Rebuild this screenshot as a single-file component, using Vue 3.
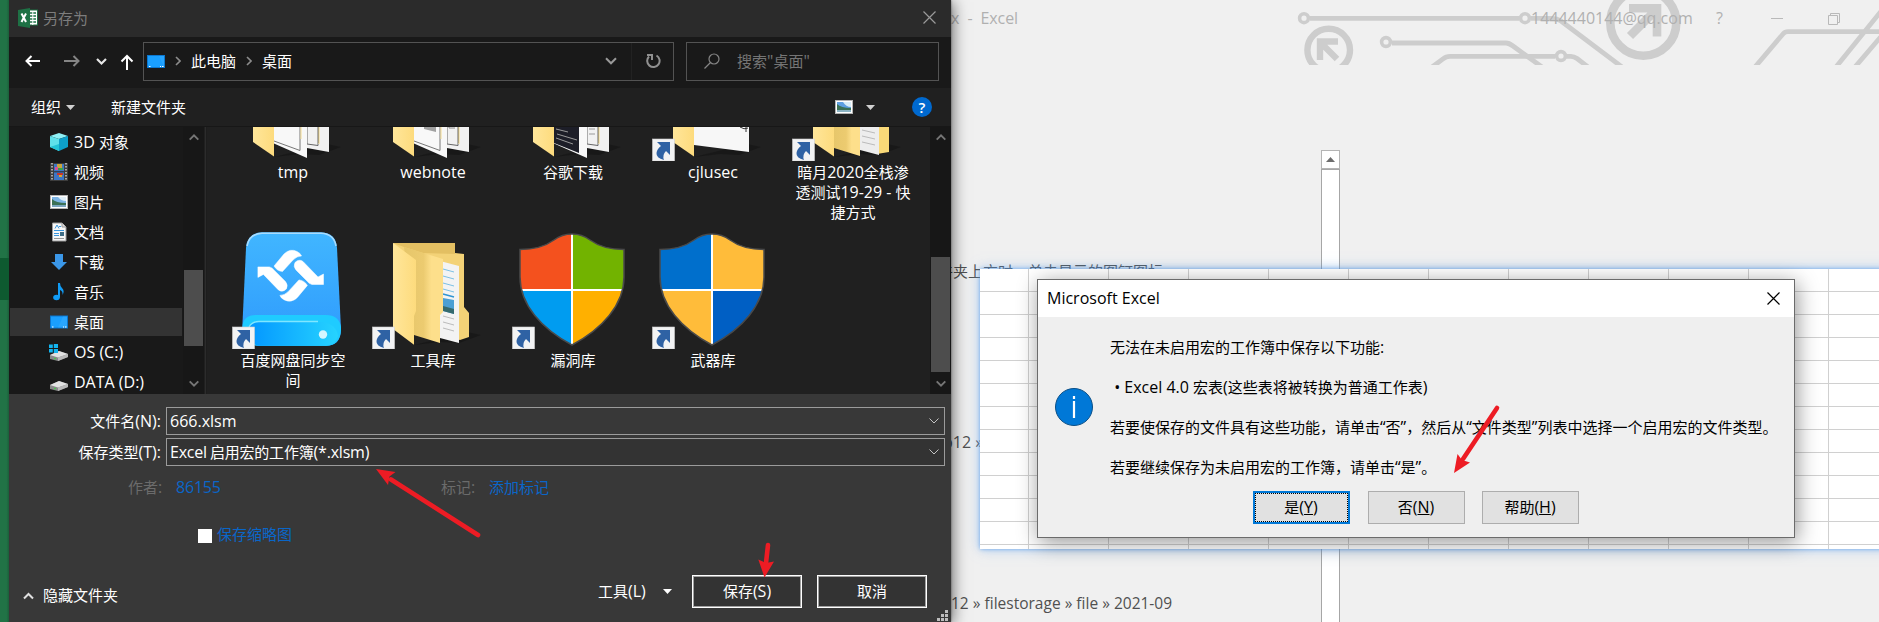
<script setup>
import { h } from 'vue'

// Splits mixed text so that Latin runs get their own optical size.
const Mix = (props) =>
  h('span', { class: 'mix' },
    (props.t.match(/[\u3000-\u9fff\uff00-\uffef]+|[^\u3000-\u9fff\uff00-\uffef]+/g) || []).map((run) =>
      /[\u3000-\u9fff\uff00-\uffef]/.test(run) ? run : h('span', { class: 'latin' }, run)))
Mix.props = ['t']

const places = [
  { name: '3D 对象', icon: 'cube' },
  { name: '视频', icon: 'film' },
  { name: '图片', icon: 'picture' },
  { name: '文档', icon: 'doc' },
  { name: '下载', icon: 'down' },
  { name: '音乐', icon: 'music' },
  { name: '桌面', icon: 'desktop', active: true },
  { name: 'OS (C:)', icon: 'osdisk' },
  { name: 'DATA (D:)', icon: 'disk' },
]

const files = [
  { lines: ['tmp'], icon: 'papers' },
  { lines: ['webnote'], icon: 'papers', print: true },
  { lines: ['谷歌下载'], icon: 'papers', dark: true },
  { lines: ['cjlusec'], icon: 'single', link: true },
  { lines: ['暗月2020全栈渗', '透测试19-29 - 快', '捷方式'], icon: 'nested', link: true },
  { lines: ['百度网盘同步空', '间'], icon: 'sync', link: true },
  { lines: ['工具库'], icon: 'folder', link: true },
  { lines: ['漏洞库'], icon: 'shield', link: true, colors: ['#f4511e', '#72b300', '#009cf0', '#ffb000'] },
  { lines: ['武器库'], icon: 'shield', link: true, colors: ['#006fcc', '#ffbc3a', '#ffbc3a', '#005fc4'] },
]

const messages = [
  '无法在未启用宏的工作簿中保存以下功能:',
  ' • Excel 4.0 宏表(这些表将被转换为普通工作表)',
  '若要使保存的文件具有这些功能，请单击“否”，然后从“文件类型”列表中选择一个启用宏的文件类型。',
  '若要继续保存为未启用宏的工作簿，请单击“是”。',
]
</script>

<template>
  <div class="screen">
    <!-- Excel backstage -->
    <section class="excel">
      <svg class="circuit" width="600" height="65" viewBox="1279 0 600 65" fill="none" stroke="#cdcdcd">
        <g stroke-width="4.8">
          <path d="M1310 18.3H1519M1531 18.3H1552Q1557 18.3 1561 21L1622 67" />
          <path d="M1392 43H1506Q1509 43 1513 46L1542 67" />
          <path d="M1432 67L1443 59Q1446 56.3 1450 56.3H1555M1566 56.3H1571Q1574 56.3 1577 58.5L1588 67" />
          <path d="M1755 67L1783 34Q1785 31.7 1788 31.7H1879M1836 67L1882 10M1855 67L1884 33" />
        </g>
        <g stroke-width="3.6">
          <circle cx="1304" cy="18.2" r="4.4" /><circle cx="1525" cy="18.2" r="4.4" />
          <circle cx="1386" cy="42" r="4.4" /><circle cx="1561" cy="56" r="4.4" />
        </g>
        <circle cx="1328.700" cy="50" r="21.300" stroke-width="6.400" />
        <path d="M1338 41.500H1320V60M1320 42L1337 59" stroke-width="6.400" />
        <circle cx="1643.300" cy="22.700" r="33" stroke-width="8.600" />
        <path d="M1629 8.300H1657V36.500M1657 9L1630 36" stroke-width="8.600" />
      </svg>
      <header class="exceltitle">
        <Mix class="doc" t="x&nbsp; -&nbsp; Excel" />
        <Mix class="mail" t="1444440144@qq.com" />
        <Mix class="q" t="?" />
        <svg class="winctl" width="72" height="16" viewBox="0 0 72 16" fill="none" stroke="#b9b9b9">
          <path d="M0 8.500H12M57.500 5.500H66.500V14.500H57.500ZM59.500 5V3.500H68.500V12.500H67" />
        </svg>
      </header>
      <div class="recents">
        <div class="hint"><Mix t="件夹上方时，单击显示的图钉图标" /></div>
        <div class="p1"><Mix t="b12 »" /></div>
        <div class="p2"><Mix t="12 » filestorage » file » 2021-09" /></div>
      </div>
      <div class="xscroll">
        <div class="xup"><svg width="9" height="5" viewBox="0 0 9 5"><path d="M0 5L4.500 0L9 5Z" fill="#6d6d6d" /></svg></div>
        <div class="xtrack"></div>
      </div>
    </section>

    <!-- Save-as window -->
    <section class="save">
      <header class="title">
        <svg width="20" height="20" viewBox="0 0 20 20">
          <rect x="9" y="2" width="10.500" height="15" fill="#fff" stroke="#1e7145" />
          <path d="M12 5H18M12 8H18M12 11H18M12 14H18" stroke="#1e7145" stroke-width="1.300" />
          <path d="M14.800 3V17" stroke="#fff" stroke-width="1" />
          <path d="M0 2L12 0V20L0 18Z" fill="#1e7145" />
          <path d="M3.500 5.500L8 14M8 5.500L3.500 14" stroke="#fff" stroke-width="2" />
        </svg>
        <Mix t="另存为" />
        <svg class="close" width="13" height="13" viewBox="0 0 13 13"><path d="M.5.500L12.500 12.500M12.500.500L.5 12.500" stroke="#9a9a9a" stroke-width="1.200" /></svg>
      </header>

      <div class="nav">
        <svg class="arrows" width="126" height="20" viewBox="0 0 126 20" fill="none" stroke-width="2">
          <path d="M15 9H1.500M6.500 4L1.500 9L6.500 14" stroke="#fff" />
          <path d="M39 9H53M48.500 4L53.500 9L48.500 14" stroke="#858585" />
          <path d="M72 7L76.500 11.500L81 7" stroke="#e6e6e6" stroke-width="2.200" />
          <path d="M102 18V4M96.500 9.500L102 4L107.500 9.500" stroke="#fff" />
        </svg>
        <div class="address">
          <svg width="18" height="13" viewBox="0 0 18 13"><rect x=".5" y=".5" width="17" height="12" fill="#1a9fff" stroke="#0b77d0" /><path d="M1 12H17L12 1H17V12" fill="#33abff" opacity=".5" /><path d="M2 11.500H3.500M13 11.500H14M15 11.500H16.500" stroke="#fff" /></svg>
          <svg class="sep" width="6" height="10" viewBox="0 0 6 10"><path d="M1 1L5 5L1 9" fill="none" stroke="#8c8c8c" stroke-width="1.600" /></svg>
          <Mix t="此电脑" />
          <svg class="sep" width="6" height="10" viewBox="0 0 6 10"><path d="M1 1L5 5L1 9" fill="none" stroke="#8c8c8c" stroke-width="1.600" /></svg>
          <Mix t="桌面" />
          <svg class="drop" width="12" height="8" viewBox="0 0 12 8"><path d="M1 1.300L6 6.300L11 1.300" fill="none" stroke="#9a9a9a" stroke-width="2" /></svg>
          <div class="refresh">
            <svg width="16" height="16" viewBox="0 0 16 16" fill="none" stroke="#909090" stroke-width="2"><path d="M11.500 2.500A6.200 6.200 0 1 1 4 3.500M2 2H7V7" /></svg>
          </div>
        </div>
        <div class="search">
          <svg width="16" height="16" viewBox="0 0 16 16" fill="none" stroke="#858585" stroke-width="1.200"><circle cx="10" cy="6" r="5" /><path d="M6.500 9.500L.5 15.500" /></svg>
          <Mix t='搜索"桌面"' />
        </div>
      </div>

      <div class="tools">
        <Mix t="组织" />
        <svg class="tri" width="9" height="5" viewBox="0 0 9 5"><path d="M0 0H9L4.500 5Z" fill="#d0d0d0" /></svg>
        <Mix class="newf" t="新建文件夹" />
        <svg class="view" width="18" height="14" viewBox="0 0 18 14"><rect width="18" height="14" fill="#b4b4b4" /><rect x="1" y="1" width="16" height="12" fill="#fff" /><rect x="2" y="2" width="14" height="10" fill="#5e9fe0" /><path d="M8 2H16V7Q11 7 8 2Z" fill="#d9edf8" /><path d="M2 4Q6 8 16 8V12H2Z" fill="#3b7156" /><path d="M2 10H16V12H2Z" fill="#8cb4c4" /></svg>
        <svg class="tri2" width="9" height="5" viewBox="0 0 9 5"><path d="M0 0H9L4.500 5Z" fill="#d0d0d0" /></svg>
        <div class="help">?</div>
      </div>

      <div class="body">
        <nav class="side">
          <div v-for="p in places" :key="p.name" class="place" :class="{ active: p.active }">
            <svg width="20" height="20" viewBox="0 0 20 20">
              <g v-if="p.icon === 'cube'">
                <path d="M1 4L10 1L19 4L10 7Z" fill="#8ff0f5" /><path d="M1 4L10 7V19L1 15Z" fill="#5fe0ea" /><path d="M19 4L10 7V19L19 15Z" fill="#0d9fc9" /><path d="M1 15L10 12V19Z" fill="#23c4d6" />
              </g>
              <g v-else-if="p.icon === 'film'">
                <rect x="1" y="1" width="18" height="18" fill="#3c3c3c" /><rect x="5" y="2" width="10" height="16" fill="#3d76c4" />
                <path d="M3 1V19M17 1V19" stroke="#a5a5a5" stroke-width="2" stroke-dasharray="1.500 1.500" />
                <rect x="8" y="2" width="5" height="4" fill="#caa43a" /><rect x="6" y="5" width="3" height="3" fill="#d94fa0" /><rect x="9" y="6" width="5" height="2" fill="#3aa14b" />
                <rect x="8" y="11" width="6" height="2" fill="#c8352c" /><rect x="10" y="13" width="3" height="2" fill="#e0a62c" /><path d="M5 9.800H15" stroke="#2b2b2b" />
              </g>
              <g v-else-if="p.icon === 'picture'">
                <rect x="1" y="3" width="18" height="14" fill="#b4b4b4" /><rect x="2" y="4" width="16" height="12" fill="#fff" /><rect x="3" y="5" width="14" height="10" fill="#7db5e6" /><path d="M9 5H17V9Q12 9 9 5Z" fill="#dfeff9" /><path d="M3 7Q7 11 17 11V15H3Z" fill="#3b7156" /><path d="M3 13H17V15H3Z" fill="#7ba6c0" />
              </g>
              <g v-else-if="p.icon === 'doc'">
                <path d="M3.500 1H13L17 5V19H3.500Z" fill="#f7f7f7" stroke="#9a9a9a" /><path d="M13 1V5H17" fill="#ddd" stroke="#9a9a9a" />
                <path d="M6 6.500L8 3L10 6.500M10 4.500H12M5 8.500H15M5 11.500H10M5 13.500H10" stroke="#3a96dd" fill="none" /><rect x="11" y="10" width="4" height="4" fill="#3f6d86" /><path d="M5 16.500H15" stroke="#999" />
              </g>
              <path v-else-if="p.icon === 'down'" d="M6 2H14V10H18L10 18L2 10H6Z" fill="#3b97e8" />
              <g v-else-if="p.icon === 'music'">
                <ellipse cx="7.500" cy="15.500" rx="3.300" ry="2.700" fill="#109bf5" /><path d="M9 1H11Q11 4 13 6Q16 9 13.500 13Q14 9 11 8V15.500H9Z" fill="#109bf5" />
              </g>
              <g v-else-if="p.icon === 'desktop'">
                <rect x="1.500" y="4" width="17" height="12" fill="#1a9fff" stroke="#0b77d0" /><path d="M9 15.500L14 4.500H18V15.500Z" fill="#33abff" opacity=".6" /><path d="M3 15H4.500M14 15H15M16 15H17.500" stroke="#fff" />
              </g>
              <g v-else>
                <path d="M1 13L10 9L19 12V15L9 19L1 17Z" fill="#8a8a8a" /><path d="M1 13L10 9L19 12L9 15.500Z" fill="#e2e2e2" /><path d="M9 15.500L19 12V15L9 19Z" fill="#b9b9b9" /><rect x="5" y="15.800" width="2" height="1.500" fill="#49c34f" />
                <path v-if="p.icon === 'osdisk'" d="M0 2.500H3.800V6H0ZM4.800 2H9V6H4.800ZM0 7H3.800V10.500H0ZM4.800 7H9V11H4.800Z" fill="#12b4f0" />
              </g>
            </svg>
            <Mix :t="p.name" />
          </div>
        </nav>
        <div class="vscroll one">
          <svg width="10" height="7" viewBox="0 0 10 7"><path d="M.700 5.700L5 1.400L9.300 5.700" fill="none" stroke="#767676" stroke-width="1.900" /></svg>
          <i></i>
          <svg width="10" height="7" viewBox="0 0 10 7"><path d="M.700 1.300L5 5.600L9.300 1.300" fill="none" stroke="#767676" stroke-width="1.900" /></svg>
        </div>
        <div class="files">
          <div class="grid">
            <div v-for="f in files" :key="f.lines[0]" class="file">
              <svg width="140" height="120" viewBox="0 0 140 120">
                <defs>
                  <linearGradient id="fold" x1="0" x2="1"><stop offset="0" stop-color="#ffe69a" /><stop offset="1" stop-color="#fddb7d" /></linearGradient>
                  <linearGradient id="foldmid" x1="0" x2="1"><stop offset="0" stop-color="#e6c66a" /><stop offset=".5" stop-color="#eccb70" /><stop offset=".7" stop-color="#fddf8b" /></linearGradient>
                  <linearGradient id="drive" x1="0" y1="0" x2="0" y2="1"><stop offset="0" stop-color="#41b6ff" /><stop offset="1" stop-color="#2e9afd" /></linearGradient>
                  <linearGradient id="base" x1="0" x2="1"><stop offset="0" stop-color="#0396ff" /><stop offset="1" stop-color="#26d3ff" /></linearGradient>
                </defs>
                <path v-if="f.icon !== 'sync' && f.icon !== 'shield'" d="M51 116L77 113L96 114L118 106L104 103Z" fill="#151515" opacity=".7" />
                <g v-if="f.icon === 'papers'">
                  <path d="M84 20L106 26V111L84 107Z" fill="#f1f1f1" />
                  <path d="M84 84V103L95 104.500V84M95.500 84V102" fill="none" stroke="#666" stroke-width="1" /><path d="M96 84V103" stroke="#f5dd91" />
                  <path d="M51 30L84 38V117L51 102.500Z" fill="#f8f8f8" />
                  <path v-if="!f.dark" d="M51 100L77 109.500V84" fill="none" stroke="#777" /><path v-if="!f.dark" d="M78 84V98" stroke="#f5dd91" />
                  <path v-if="f.print" d="M61 84V88L73 91V84Z" fill="#a0a0a0" /><path v-if="f.print" d="M86 84V87H92" stroke="#888" fill="none" />
                  <path v-if="f.dark" d="M51 84H76V112L51 102Z" fill="#1d1e28" />
                  <path v-if="f.dark" d="M53 88L65 91M54 93L74 99M53 97L70 103M86 88H92M86 93H92" stroke="#999" />
                  <path d="M30 14L51 30V115.500L30 101Z" fill="url(#fold)" />
                </g>
                <g v-else-if="f.icon === 'single'">
                  <path d="M51 60H106V111L51 104Z" fill="#f7f7f7" /><path d="M97 86Q101 89 105 87M103 86V91" fill="none" stroke="#333" />
                  <path d="M30 14L51 30V115.500L30 101Z" fill="url(#fold)" />
                </g>
                <g v-else-if="f.icon === 'nested'">
                  <path d="M92 14H106V111L94 113Z" fill="#f9d978" /><path d="M77 60H96V114L77 109Z" fill="#ededed" />
                  <path d="M79 89L92 92M79 95L92 98M79 101L92 104" stroke="#bbb" />
                  <path d="M49 30L77 40V115L51 107Z" fill="url(#foldmid)" /><path d="M30 14L51 30V115.500L30 101Z" fill="url(#fold)" />
                </g>
                <g v-else-if="f.icon === 'folder'">
                  <path d="M30 14H92V24L101 25V78L106 84V108L97 111L60 104Z" fill="#f3d277" />
                  <path d="M30 14H92V25L60 24L41 18Z" fill="#e3bf62" />
                  <path d="M77 32L96 37V114L77 109Z" fill="#f3f3f3" />
                  <path d="M80 40L91 43M80 47L91 50M80 54L91 57M80 60L91 63" stroke="#7cc0e4" /><path d="M80 65L91 68" stroke="#2f94d2" stroke-width="1.500" />
                  <path d="M80 69L91 71V85L80 82Z" fill="#4b9fd3" /><path d="M80 77L91 80V85L80 82Z" fill="#356a6d" />
                  <path d="M80 87L91 90M80 93L91 96M80 99L91 102" stroke="#bbb" />
                  <path d="M41 18L80 30V83L77 86V114L51 106Z" fill="url(#foldmid)" />
                  <path d="M30 14L53 31V82L51 87V115.700L30 100Z" fill="url(#fold)" />
                </g>
                <g v-else-if="f.icon === 'sync'">
                  <path d="M39 3.300H98Q113 4 114 19L118 100Q118 116.700 103 116.700H35Q19 116 19.300 98L23 19Q24 4 39 3.300Z" fill="url(#drive)" />
                  <path d="M24 17Q26 5 39 4.300H98Q111 5 113 17" fill="none" stroke="#a7dcff" stroke-width="1.600" />
                  <path d="M19.500 98Q20 86 33 86H103Q116 86 118 98V101Q117 116.700 103 116.700H35Q19.500 116 19.500 98Z" fill="#1fcbff" />
                  <path d="M25 99Q28 93 36 93H100Q113 95 115 107Q112 116.700 103 116.700H35Q25 114 25 99Z" fill="url(#base)" />
                  <path d="M26 98Q29 92.500 36 92.500H95" fill="none" stroke="#7fe6ff" stroke-width="1.300" />
                  <circle cx="100" cy="105.500" r="4.200" fill="#d3f6ff" />
                  <g fill="#fff" stroke="#fff" stroke-width=".5" stroke-linejoin="round">
                    <path d="M51 37L61 25Q67 19 74 22.500Q77.500 24 78.500 27Q74 27 70 31L59.500 42.500Q54 42 51 37Z" />
                    <path d="M72 33.500Q76 29.500 80 32.500L95 48L100.500 45V55.500H89Q86 55 84 52L73 41Q70 37.500 72 33.500Z" />
                    <g transform="rotate(180 67.700 46.700)">
                      <path d="M51 37L61 25Q67 19 74 22.500Q77.500 24 78.500 27Q74 27 70 31L59.500 42.500Q54 42 51 37Z" />
                      <path d="M72 33.500Q76 29.500 80 32.500L95 48L100.500 45V55.500H89Q86 55 84 52L73 41Q70 37.500 72 33.500Z" />
                    </g>
                  </g>
                </g>
                <g v-else>
                  <clipPath id="shieldclip"><path d="M17 20.500Q38 20.500 51 11Q59 5 69 5Q79 5 87 11Q100 20.500 121 20.500V48C121 76 99 100 69 116C39 100 17 76 17 48Z" /></clipPath>
                  <g clip-path="url(#shieldclip)">
                    <rect x="10" width="59" height="61" :fill="f.colors[0]" /><rect x="69" width="59" height="61" :fill="f.colors[1]" />
                    <rect x="10" y="61" width="59" height="59" :fill="f.colors[2]" /><rect x="69" y="61" width="59" height="59" :fill="f.colors[3]" />
                    <path d="M69 0V120M10 61H130" stroke="#fff" stroke-width="2" />
                  </g>
                  <path d="M17 20.500Q38 20.500 51 11Q59 5 69 5Q79 5 87 11Q100 20.500 121 20.500V48C121 76 99 100 69 116C39 100 17 76 17 48Z" fill="none" stroke="#4a4a4a" stroke-width="1.500" />
                </g>
                <g v-if="f.link">
                  <rect x="9.500" y="98" width="22" height="22" fill="#f2f3f4" stroke="#d0d0d0" stroke-width=".6" />
                  <path d="M14 101H27V114L23 110Q19 114 21 119Q13 117 13.500 112Q14 108 18 105Z" fill="#2f62a4" />
                </g>
              </svg>
              <div v-for="l in f.lines" :key="l" class="line"><Mix :t="l" /></div>
            </div>
          </div>
        </div>
        <div class="vscroll two">
          <svg width="10" height="7" viewBox="0 0 10 7"><path d="M.700 5.700L5 1.400L9.300 5.700" fill="none" stroke="#767676" stroke-width="1.900" /></svg>
          <i></i>
          <svg width="10" height="7" viewBox="0 0 10 7"><path d="M.700 1.300L5 5.600L9.300 1.300" fill="none" stroke="#767676" stroke-width="1.900" /></svg>
        </div>
      </div>

      <footer class="foot">
        <div class="field">
          <label><Mix t="文件名(N):" /></label>
          <div class="box"><Mix t="666.xlsm" /><svg width="10" height="6" viewBox="0 0 10 6"><path d="M.500.500L5 5L9.500.500" fill="none" stroke="#c4c4c4" /></svg></div>
        </div>
        <div class="field">
          <label><Mix t="保存类型(T):" /></label>
          <div class="box dark"><Mix t="Excel 启用宏的工作簿(*.xlsm)" /><svg width="10" height="6" viewBox="0 0 10 6"><path d="M.500.500L5 5L9.500.500" fill="none" stroke="#c4c4c4" /></svg></div>
        </div>
        <div class="meta">
          <Mix class="dim m1" t="作者:" /><Mix class="lnk m2" t="86155" /><Mix class="dim m3" t="标记:" /><Mix class="lnk" t="添加标记" />
        </div>
        <div class="thumb"><i></i><Mix class="lnk" t="保存缩略图" /></div>
        <div class="actions">
          <svg width="11" height="8" viewBox="0 0 11 8"><path d="M1 6.500L5.500 2L10 6.500" fill="none" stroke="#e0e0e0" stroke-width="2" /></svg>
          <Mix class="hide" t="隐藏文件夹" />
          <Mix class="tool" t="工具(L)" />
          <svg class="tt" width="9" height="5" viewBox="0 0 9 5"><path d="M0 0H9L4.500 5Z" fill="#fff" /></svg>
          <div class="btn"><Mix t="保存(S)" /></div>
          <div class="btn"><Mix t="取消" /></div>
        </div>
        <svg class="grip" width="11" height="11" viewBox="0 0 11 11" fill="#bdbdbd"><path d="M8 0h3v3h-3zM4 4h3v3h-3zM8 4h3v3h-3zM0 8h3v3h-3zM4 8h3v3h-3zM8 8h3v3h-3z" /></svg>
      </footer>
    </section>

    <div class="strip"><i></i></div>

    <!-- Worksheet and message box -->
    <div class="sheet"></div>
    <section class="msg">
      <header>
        <Mix t="Microsoft Excel" />
        <svg width="13" height="13" viewBox="0 0 13 13"><path d="M.5.500L12.500 12.500M12.500.500L.5 12.500" stroke="#000" stroke-width="1.200" /></svg>
      </header>
      <div class="content">
        <svg width="38" height="38" viewBox="0 0 38 38"><circle cx="19" cy="19" r="18.500" fill="#0078d7" stroke="#0a4f87" /><path d="M19 13V30M19 8V11" stroke="#fff" stroke-width="2.200" /></svg>
        <div class="text"><p v-for="m in messages" :key="m"><Mix :t="m" /></p></div>
      </div>
      <div class="btns">
        <button class="focus"><span>是<b>(<u>Y</u>)</b></span></button>
        <button><span>否<b>(<u>N</u>)</b></span></button>
        <button class="last"><span>帮助<b>(<u>H</u>)</b></span></button>
      </div>
    </section>

    <svg class="marks" width="1879" height="622" viewBox="0 0 1879 622" fill="#ed1c24" stroke="#ed1c24" stroke-linecap="round">
      <path d="M391 479.500L478 535" stroke-width="4.600" /><path d="M376 469L395.500 472L389.500 476.500L388 485Z" stroke="none" />
      <path d="M768 545L766 563" stroke-width="4.600" /><path d="M764.500 577.500L758.300 559.500L766 563L774 561.500Z" stroke="none" />
      <path d="M1497 408L1463 459" stroke-width="4.600" /><path d="M1454 473L1457.500 454L1462 460L1470 462.500Z" stroke="none" />
    </svg>
  </div>
</template>

<style>
body { margin: 0; }
.mix { white-space: pre; }
.mix .latin { font-size: 1.0667em; line-height: 0; }
</style>

<style scoped>
.screen { position: relative; width: 1879px; height: 622px; overflow: hidden; background: #f0f0f0; font: 15px/20px "Open Sans", "Noto Sans CJK SC", sans-serif; }
svg { display: block; flex: none; }
.strip { position: absolute; left: 0; top: 0; width: 9px; height: 622px; background: linear-gradient(90deg, #217346 70%, #1b5f3a); }
.strip i { display: block; height: 42px; margin-top: 258px; background: #0e5a30; }

.excel { position: absolute; left: 930px; top: 0; width: 949px; height: 622px; }
.circuit { position: absolute; right: 0; top: 0; }
.exceltitle { position: relative; display: flex; align-items: center; height: 36px; color: #b0b0b0; }
.doc { width: 580px; padding-left: 21px; letter-spacing: -.1px; margin-top: -1px; }
.mail { width: 185px; margin-top: -1px; }
.q { width: 55px; margin-top: -1px; }
.recents { padding-top: 225px; color: #505050; }
.hint { padding-left: 8px; height: 20px; }
.p1 { padding: 151px 0 0 13px; height: 20px; }
.p2 { padding: 141px 0 0 21px; height: 20px; font-size: 14.55px; }
.xscroll { position: absolute; left: 391px; top: 150px; width: 19px; height: 472px; box-sizing: border-box; }
.xup { height: 17px; border: 1px solid #b4b4b4; background: #fff; display: flex; align-items: center; justify-content: center; }
.xtrack { height: 453px; border: 1px solid #a6a6a6; border-bottom: 0; background: #fff; }

.save { position: absolute; left: 9px; top: 0; width: 942px; height: 622px; display: flex; flex-direction: column; background: #383838; color: #fff; box-shadow: 2px 2px 14px rgba(0,0,0,.55), 0 0 2px rgba(0,0,0,.5); }
.title { height: 37px; background: #2b2b2b; display: flex; align-items: center; padding: 0 15px 2px 9px; color: #7d7d7d; gap: 5px; box-sizing: border-box; }
.close { margin-left: auto; }
.nav { height: 51px; background: #191919; display: flex; align-items: center; padding: 0 0 3px 16px; box-sizing: border-box; }
.nav .arrows { width: 126px; margin: 2px -8px 0 0; }
.nav .mix { margin-top: -1px; }
.address { width: 531px; height: 39px; box-sizing: border-box; border: 1px solid #535353; display: flex; align-items: center; padding-left: 3px; }
.sep { margin: 0 10px; }
.drop { margin-left: auto; }
.refresh { margin-left: 14px; width: 41px; height: 37px; border-left: 1px solid #222; display: flex; align-items: center; justify-content: center; }
.search { margin-left: 12px; width: 253px; height: 39px; box-sizing: border-box; border: 1px solid #535353; display: flex; align-items: center; padding-left: 17px; gap: 17px; color: #757575; }
.tools { height: 39px; background: #202020; display: flex; align-items: center; padding: 0 19px 0 22px; box-sizing: border-box; border-bottom: 1px solid #171717; }
.tri { margin-left: 5px; }
.newf { margin-left: 36px; }
.view { margin-left: auto; }
.tri2 { margin: 0 37px 0 13px; }
.help { width: 20px; height: 20px; border-radius: 50%; background: #0069cf; text-align: center; font-weight: 600; font-size: 15px; line-height: 20px; }
.body { height: 267px; display: flex; overflow: hidden; background: #202020; }
.side { width: 174px; background: #191919; }
.place { height: 30px; display: flex; align-items: center; padding-left: 40px; gap: 5px; }
.place.active { background: linear-gradient(#333, #333) 1px 1px / 172px 28px no-repeat; }
.vscroll { display: flex; flex-direction: column; align-items: center; padding: 7px 1px; background: #171717; box-sizing: border-box; }
.vscroll i { background: #4d4d4d; width: 19px; }
.vscroll svg:last-child { margin-top: auto; }
.one { width: 21px; }
.one i { height: 76px; margin-top: 129px; }
.two { width: 21px; }
.two i { height: 115px; margin-top: 116px; }
.files { width: 725px; overflow: hidden; border-left: 1px solid #2c2c2c; box-shadow: inset 1px 0 #1d1d1d; box-sizing: border-box; margin-left: 1px; }
.grid { display: grid; grid-template-columns: repeat(5, 140px); grid-auto-rows: 188px; margin: -86px 0 0 17px; width: 700px; }
.file { text-align: center; }
.line { height: 20px; position: relative; top: 1px; }
.foot { flex: 1; padding: 13px 6px 0 0; position: relative; background: #383838; }
.field { display: flex; align-items: center; margin-bottom: 3px; height: 28px; }
.field label { width: 152px; text-align: right; margin-right: 5px; }
.box { flex: 1; height: 28px; box-sizing: border-box; border: 1px solid #9b9b9b; display: flex; align-items: center; justify-content: space-between; padding: 0 5px 0 3px; }
.box.dark { background: #333; }
.box.dark .mix { word-spacing: -1px; letter-spacing: -.2px; }
.meta { display: flex; padding: 8px 0 0 119px; }
.dim { color: #6b6b6b; }
.lnk { color: #0a66c8; }
.m1 { width: 48px; }
.m2 { width: 265px; letter-spacing: -.2px; }
.m3 { width: 48px; }
.thumb { display: flex; padding: 27px 0 0 189px; gap: 5px; }
.thumb i { width: 14px; height: 14px; background: #fff; margin-top: 5px; }
.actions { display: flex; align-items: center; padding-left: 14px; margin-top: 31px; height: 33px; }
.hide { width: 554px; padding: 6px 0 0 10px; margin-left: -1px; box-sizing: border-box; }
.actions > svg:first-child { margin-top: 9px; }
.tool { width: 76px; padding: 0 0 2px 11px; box-sizing: border-box; flex: none; }
.tt { margin-right: 20px; }
.btn { width: 110px; height: 33px; box-sizing: border-box; border: 1px solid #fff; box-shadow: inset 0 0 0 1px #a0a0a0; background: #333; display: flex; align-items: center; justify-content: center; margin-right: 15px; padding-bottom: 2px; flex: none; }
.grip { position: absolute; right: 3px; bottom: 1px; }

.sheet { position: absolute; left: 980px; top: 269px; width: 910px; height: 280px; background:
  repeating-linear-gradient(90deg, #d0d0d0 0 1px, transparent 1px 80px) 48px 0 / 100% 100% no-repeat,
  repeating-linear-gradient(180deg, transparent 0 22px, #d0d0d0 22px 23px) 0 0 / 100% 100%, #fff; box-shadow: 0 0 4px rgba(60,140,235,.65), 0 0 12px rgba(110,170,240,.55); }
.msg { position: absolute; left: 1037px; top: 279px; width: 758px; height: 259px; box-sizing: border-box; border: 1px solid #6b6b6b; background: #efefef; color: #000; box-shadow: 2px 4px 20px rgba(0,0,0,.42); }
.msg header { height: 37px; background: #fff; display: flex; align-items: center; justify-content: space-between; padding: 0 14px 0 9px; }
.msg header .mix { margin-top: -2px; }
.content { display: flex; padding: 20px 0 0 17px; height: 134px; gap: 17px; }
.content > svg { margin-top: 51px; }
.text p { margin: 0 0 20px; height: 20px; white-space: pre; }
.btns { display: flex; gap: 18px; padding: 20px 0 0 215px; }
.btns button { width: 97px; height: 33px; box-sizing: border-box; border: 1px solid #adadad; background: #e1e1e1; padding: 0 1px 2px 0; font: inherit; color: #000; }
.btns .last { margin-left: -1px; }
.btns b { font-weight: 400; font-size: 1.0667em; line-height: 0; }
.btns .focus { border: 2px solid #0078d7; outline: 1px dotted #000; outline-offset: -3px; }
.marks { position: absolute; left: 0; top: 0; pointer-events: none; }
</style>
